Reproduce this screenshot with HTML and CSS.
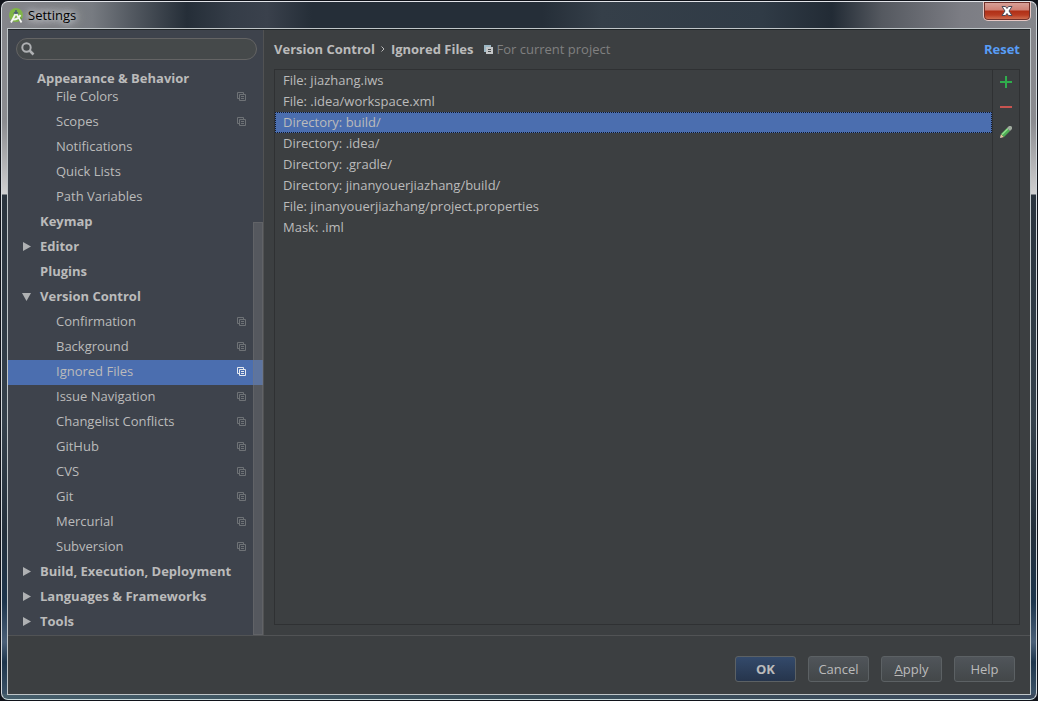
FILE: index.html
```html
<!DOCTYPE html>
<html lang="en">
<head>
<meta charset="utf-8">
<title>Settings</title>
<link rel="stylesheet" href="styles.css">
</head>
<body>
<svg class="defs" aria-hidden="true">
  <symbol id="copy" viewBox="0 0 9 9">
    <path d="M2.5 6.5H.5V.5H6.5V2" fill="none" stroke="currentColor"/>
    <path d="M2.5 2.5H8.5V8.5H2.5ZM4 4.5H7M4 6.5H7" fill="none" stroke="currentColor"/>
  </symbol>
  <symbol id="closed" viewBox="0 0 9 9"><path d="M1 0L9 4.500L1 9Z" fill="currentColor"/></symbol>
  <symbol id="open" viewBox="0 0 9 9"><path d="M0 1H9L4.500 9Z" fill="currentColor"/></symbol>
</svg>
<div class="window">
  <header class="titlebar">
    <svg class="logo" viewBox="0 0 16 16" aria-hidden="true">
      <circle cx="7" cy="7" r="7" fill="#7fb546"/>
      <path d="M8 7L13 10.500L11 13L9 12Z" fill="#5d8d35"/>
      <path d="M4.500 6A2.500 2.500 0 0 1 9.500 6Z" fill="#4d6170"/>
      <path d="M7 2V4" stroke="#4d6170" stroke-width="1.500"/>
      <path d="M6.500 6L2 14.500M7.500 6L12.500 14.500M3.500 11.500Q9 12 11.500 7" fill="none" stroke="#f4f6f2" stroke-width="1.800"/>
    </svg>
    <h1 class="title">Settings</h1>
    <button class="close" aria-label="Close">
      <svg viewBox="0 0 12 10" aria-hidden="true"><path d="M1 .5H4.500L6 2.500L7.500 .5H11L8 5L11 9.500H7.500L6 7.500L4.500 9.500H1L4 5Z" fill="#fff" stroke="#4a4a58"/></svg>
    </button>
  </header>
  <main class="dialog">
    <div class="body">
      <aside class="sidebar">
        <label class="search">
          <svg viewBox="0 0 14 14" aria-hidden="true"><circle cx="5.500" cy="5.500" r="4.200" fill="none" stroke="#afb1b3" stroke-width="2"/><path d="M8.500 8.500L12.500 12.500" stroke="#afb1b3" stroke-width="2.500"/></svg>
          <input type="text" aria-label="Search settings">
        </label>
        <nav class="tree" aria-label="Settings categories">
          <h2 class="tree-header">Appearance &amp; Behavior</h2>
          <div class="rows">
            <button class="row leaf">File Colors<svg><use href="#copy"/></svg></button>
            <button class="row leaf">Scopes<svg><use href="#copy"/></svg></button>
            <button class="row leaf">Notifications</button>
            <button class="row leaf">Quick Lists</button>
            <button class="row leaf">Path Variables</button>
            <button class="row group">Keymap</button>
            <button class="row group parent"><svg><use href="#closed"/></svg>Editor</button>
            <button class="row group">Plugins</button>
            <button class="row group parent" aria-expanded="true"><svg><use href="#open"/></svg>Version Control</button>
            <button class="row leaf">Confirmation<svg><use href="#copy"/></svg></button>
            <button class="row leaf">Background<svg><use href="#copy"/></svg></button>
            <button class="row leaf selected" aria-current="page">Ignored Files<svg><use href="#copy"/></svg></button>
            <button class="row leaf">Issue Navigation<svg><use href="#copy"/></svg></button>
            <button class="row leaf">Changelist Conflicts<svg><use href="#copy"/></svg></button>
            <button class="row leaf">GitHub<svg><use href="#copy"/></svg></button>
            <button class="row leaf">CVS<svg><use href="#copy"/></svg></button>
            <button class="row leaf">Git<svg><use href="#copy"/></svg></button>
            <button class="row leaf">Mercurial<svg><use href="#copy"/></svg></button>
            <button class="row leaf">Subversion<svg><use href="#copy"/></svg></button>
            <button class="row group parent"><svg><use href="#closed"/></svg>Build, Execution, Deployment</button>
            <button class="row group parent"><svg><use href="#closed"/></svg>Languages &amp; Frameworks</button>
            <button class="row group parent"><svg><use href="#closed"/></svg>Tools</button>
          </div>
          <div class="scroll-thumb"></div>
        </nav>
      </aside>
      <section class="content">
        <div class="heading">
          <h2 class="crumbs"><span>Version Control</span><svg class="chevron" viewBox="0 0 4 6" aria-hidden="true"><path d="M.5 .5L3 3L.5 5.500" fill="none" stroke="#bbb"/></svg><span>Ignored Files</span></h2>
          <svg class="project-icon" viewBox="0 0 9 9" aria-hidden="true"><path d="M0 0H7V2H2V7H0Z" fill="#9cb7c4"/><path d="M2 2H9V9H2Z" fill="#c4c6c7"/><path d="M4 4.500H7M4 6.500H7" stroke="#45494b"/></svg>
          <span class="scope">For current project</span>
          <a class="reset" href="#reset">Reset</a>
        </div>
        <div class="panel">
          <ul class="list" role="listbox" aria-label="Ignored files">
            <li role="option">File: jiazhang.iws</li>
            <li role="option">File: .idea/workspace.xml</li>
            <li role="option" class="selected" aria-selected="true">Directory: build/</li>
            <li role="option">Directory: .idea/</li>
            <li role="option">Directory: .gradle/</li>
            <li role="option">Directory: jinanyouerjiazhang/build/</li>
            <li role="option">File: jinanyouerjiazhang/project.properties</li>
            <li role="option">Mask: .iml</li>
          </ul>
          <div class="tools">
            <button aria-label="Add"><svg viewBox="0 0 12 12"><path d="M6 0V12M0 6H12" stroke="#2fae4c" stroke-width="2"/></svg></button>
            <button aria-label="Remove"><svg viewBox="0 0 12 12"><path d="M0 6H12" stroke="#c75450" stroke-width="2"/></svg></button>
            <button aria-label="Edit"><svg viewBox="0 0 12 12"><path d="M0 12L1 8L4 11Z" fill="#e5c697"/><path d="M0 12L.5 10L2 11.500Z" fill="#aaa"/><path d="M1 8L7 2L10 5L4 11Z" fill="#4fae55"/><path d="M1.500 8L7.500 2L8.500 3L2.500 9Z" fill="#93e08f"/><path d="M7 2L9 0H11L12 1V3L10 5Z" fill="#9faa9e"/></svg></button>
          </div>
        </div>
      </section>
    </div>
    <footer class="footer">
      <button class="button primary">OK</button>
      <button class="button">Cancel</button>
      <button class="button"><u>A</u>pply</button>
      <button class="button">Help</button>
    </footer>
  </main>
</div>
</body>
</html>
```
FILE: styles.css
```css
* { box-sizing: border-box; }
body {
  margin: 0;
  padding: 1px;
  background: #10131a;
  color: #bbb;
  font: 13px/18px "Open Sans", "Noto Sans", sans-serif;
}
button { padding: 0; border: 0; background: none; color: inherit; font: inherit; }
h1, h2, ul { margin: 0; padding: 0; font: inherit; list-style: none; }
.defs { position: absolute; width: 0; height: 0; }

.window {
  display: flex;
  flex-direction: column;
  height: calc(100vh - 2px);
  padding: 0 5px 4px;
  border: 1px solid #d3d8dc;
  border-color: #e2e4e9 #d3d8dc #cfe0e2;
  border-radius: 7px;
  background:
    linear-gradient(90deg, #85868b 0, #777b81 90px, #535961 130px, #252e38 185px, #353d48 230px, #3a414c 265px, #252e38 310px, #252e38 540px, #353f49 600px, #303b46 760px, #222b35 830px, #555960 880px, #7c7d84 960px, #85868b 100%) top / 100% 28px no-repeat,
    linear-gradient(90deg, #465e6b, #3b4f5a 50%, #3c4a5d) bottom / 100% 5px no-repeat,
    linear-gradient(#85868b 28px, #8b8c90 120px, #d0d0d1 192px, #2a343e 193px, #35414c 420px, #24303c 530px, #1d354c 600px, #4b6078 640px, #1d354c 660px, #40566a 100%);
}
.titlebar { display: flex; align-items: flex-start; height: 26px; }
.logo { width: 16px; height: 16px; margin: 6px 3px 0 2px; }
.title {
  margin-top: 4px;
  color: #000;
  text-shadow: 0 0 6px #cdd0d4, 0 0 8px #cdd0d4, 0 0 12px #cdd0d4;
}
.close {
  display: grid;
  place-items: center;
  width: 48px;
  height: 19px;
  margin-left: auto;
  border: 1px solid #e6c6c2;
  border-top: 0;
  border-radius: 0 0 5px 5px;
  background: linear-gradient(#d9a49c, #cf8175 8px, #b02f16 9px, #b93c22 13px, #d4795a);
  box-shadow: inset 0 0 0 1px #70302a;
}
.close svg { width: 12px; height: 10px; }

.dialog {
  display: flex;
  flex: 1;
  flex-direction: column;
  min-height: 0;
  border: 1px solid #bfc5c8;
  background: #3c3f41;
  box-shadow: inset 0 1px #1f2426;
  padding-top: 1px;
}
.body { display: flex; flex: 1; min-height: 0; }
.sidebar {
  display: flex;
  flex-direction: column;
  width: 256px;
  border-right: 1px solid #515253;
  background: #3e434c;
}
.search {
  display: flex;
  align-items: center;
  gap: 6px;
  height: 22px;
  margin: 8px 6px 6px 8px;
  padding: 0 8px 0 4px;
  border: 1px solid #646464;
  border-radius: 11px;
  background: #45494a;
}
.search svg { width: 14px; height: 14px; }
.search input { flex: 1; min-width: 0; border: 0; outline: 0; background: none; color: inherit; font: inherit; }
.tree { position: relative; flex: 1; min-height: 0; overflow: hidden; }
.tree-header { height: 19px; padding-left: 29px; font-weight: 700; line-height: 24px; }
.rows { display: flex; flex-direction: column; }
.row { display: flex; align-items: center; height: 25px; padding-bottom: 3px; text-align: left; white-space: nowrap; }
.row svg { width: 9px; height: 9px; }
.leaf { padding-right: 17px; padding-left: 48px; }
.leaf svg { margin-left: auto; color: #6e7276; }
.group { padding-left: 32px; font-weight: 700; }
.parent { gap: 9px; padding-left: 14px; }
.parent svg { color: #afb1b3; }
.row.selected { background: #4b6eaf; }
.row.selected svg { color: #e4e8f0; }
.scroll-thumb {
  position: absolute;
  top: 27.5%;
  right: 0;
  bottom: 0;
  width: 10px;
  border: 1px solid rgba(120, 120, 120, .35);
  background: rgba(130, 130, 130, .35);
}

.content { display: flex; flex: 1; flex-direction: column; min-width: 0; padding: 9px 10px 10px; }
.heading { display: flex; align-items: center; height: 20px; margin-bottom: 10px; }
.crumbs { display: flex; align-items: center; gap: 6px; font-weight: 700; }
.chevron { width: 4px; height: 6px; }
.project-icon { width: 9px; height: 9px; margin: 0 4px 0 10px; }
.scope { color: #808080; }
.reset { margin-left: auto; color: #589df6; font-weight: 700; text-decoration: none; }
.panel { display: flex; flex: 1; border: 1px solid #2f3133; }
.list { flex: 1; }
.list li { height: 21px; padding: 0 8px; line-height: 21px; }
.list .selected { padding: 0 7px; border: 1px dotted #10182a; background: #4b6eaf; line-height: 19px; }
.tools { display: flex; flex-direction: column; width: 27px; border-left: 1px solid #2f3133; }
.tools button { display: grid; place-items: center; height: 25px; padding-bottom: 2px; }
.tools svg { width: 12px; height: 12px; }

.footer {
  display: flex;
  justify-content: flex-end;
  gap: 12px;
  padding: 20px 15px 12px;
  border-top: 1px solid #515355;
}
.button {
  width: 61px;
  height: 26px;
  border: 1px solid #5c6164;
  border-radius: 3px;
  background: linear-gradient(#50555a, #434749);
}
.primary { background: linear-gradient(#344a6b, #26354c); font-weight: 700; }
```
